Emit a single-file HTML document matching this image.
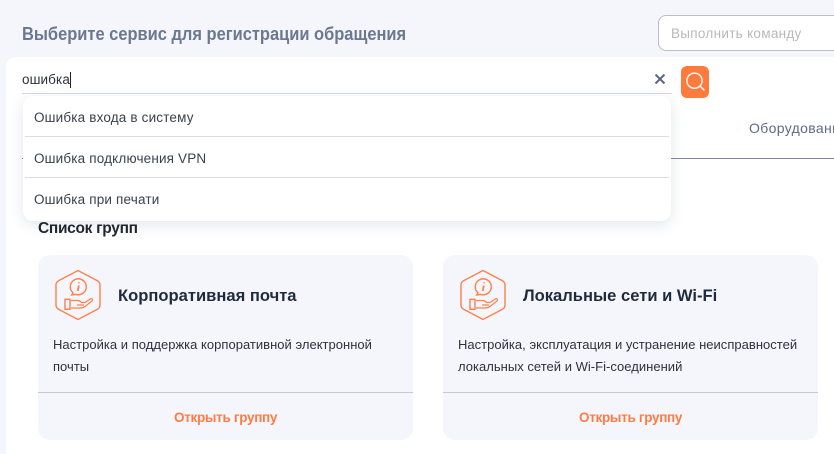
<!DOCTYPE html>
<html lang="ru"><head><meta charset="utf-8"><title>Сервис</title>
<style>
html,body{margin:0;padding:0;width:834px;height:454px;overflow:hidden;background:#f5f6fb;font-family:"Liberation Sans","Noto Sans CJK SC",sans-serif}
div{position:absolute;box-sizing:border-box;white-space:nowrap}
.t{line-height:20px;height:20px}
.panel{left:6px;top:57px;width:828px;height:397px;background:#fff;border-radius:10px 0 0 0}
.card{top:255px;width:375px;height:185px;background:#f5f6fb;border-radius:12px}
.dd{left:23px;top:96px;width:648px;height:125px;background:#fff;border-radius:10px;box-shadow:0 4px 14px rgba(90,100,130,.16)}
.sep{height:1px;background:#dcdce4}
.item{font-size:13.5px;color:#3c404b;left:34px;letter-spacing:.17px}
.h{font-size:17px;font-weight:bold;color:#1f2a3d;top:286px;transform:scaleX(.975);transform-origin:0 50%}
.p{font-size:13px;color:#2e323b;letter-spacing:.02px}
.o{font-size:13.5px;font-weight:bold;color:#ff7a45;top:408px;letter-spacing:-.3px}
</style></head><body>
<div class="t" style="left:22px;top:24px;font-size:18px;font-weight:bold;color:#6b7890;transform:scaleX(.914);transform-origin:0 50%">Выберите сервис для регистрации обращения</div>
<div style="left:658px;top:15px;width:176px;height:36px;background:#fff;border:1px solid #bdbdc2;border-right:0;border-radius:8px 0 0 8px"></div>
<div class="t" style="left:671px;top:24px;font-size:13.5px;color:#b8b8bc;letter-spacing:.3px">Выполнить команду</div>
<div class="panel"></div>
<div class="t" style="left:22px;top:70px;font-size:13.5px;color:#2c303a;letter-spacing:.1px">ошибка</div>
<div style="left:70px;top:72px;width:1px;height:16px;background:#222"></div>
<div style="left:22px;top:93px;width:650px;height:1px;background:#d8d9e2"></div>
<svg style="position:absolute;left:654px;top:73px" width="12" height="12" viewBox="0 0 12 12"><path d="M1.5 1.5L10.5 10.5M10.5 1.5L1.5 10.5" stroke="#5d6880" stroke-width="2"/></svg>
<svg style="position:absolute;left:681px;top:66px" width="28" height="32" viewBox="0 0 28 32"><rect width="28" height="32" rx="6" fill="#ff7a3d"/><circle cx="13.5" cy="14.7" r="7.6" fill="none" stroke="#fff5ee" stroke-width="1.5"/><path d="M19 20L23.5 24.5" stroke="#fff5ee" stroke-width="1.5"/></svg>
<div class="t" style="left:749px;top:118px;font-size:14px;color:#5f6b82;letter-spacing:.35px">Оборудование</div>
<div style="left:22px;top:158px;width:812px;height:1px;background:#7d879f"></div>
<div class="dd"></div>
<div class="sep" style="left:25px;top:136px;width:644px"></div>
<div class="sep" style="left:25px;top:177px;width:644px"></div>
<div class="t item" style="top:108px">Ошибка входа в систему</div>
<div class="t item" style="top:149px">Ошибка подключения VPN</div>
<div class="t item" style="top:190px">Ошибка при печати</div>
<div class="t" style="left:38px;top:219px;font-size:15.5px;font-weight:bold;color:#1f2630;letter-spacing:-.3px">Список групп</div>

<div class="card" style="left:38px"></div>
<div class="card" style="left:443px"></div>
<div style="left:38px;top:392px;width:375px;height:1px;background:#c9c9cd"></div>
<div style="left:443px;top:392px;width:375px;height:1px;background:#c9c9cd"></div>

<svg style="position:absolute;left:54px;top:269px" width="48" height="52" viewBox="0 0 48 52" fill="none" stroke="#ff7f4d" stroke-width="1.4">
<path d="M24 1.5L43 11.5Q46 13 46 16V36Q46 39 43 40.5L24 50.5L5 40.5Q2 39 2 36V16Q2 13 5 11.5Z"/>
<path d="M19 23.8A8 8 0 1 1 21.8 25.4L17.7 26Z"/>
<path d="M25 13.3V14.2M24.8 16.5L23.8 22" stroke-width="1.8"/>
<rect x="11" y="30.3" width="5" height="10"/>
<path d="M17 31.5H23Q26 31.5 27.5 33.5H31L37 29.5Q39.5 30 38 32L31 37.5Q29 39 26 39H17M23 36H30" stroke-width="1.2"/>
</svg>
<svg style="position:absolute;left:459px;top:269px" width="48" height="52" viewBox="0 0 48 52" fill="none" stroke="#ff7f4d" stroke-width="1.4">
<path d="M24 1.5L43 11.5Q46 13 46 16V36Q46 39 43 40.5L24 50.5L5 40.5Q2 39 2 36V16Q2 13 5 11.5Z"/>
<path d="M19 23.8A8 8 0 1 1 21.8 25.4L17.7 26Z"/>
<path d="M25 13.3V14.2M24.8 16.5L23.8 22" stroke-width="1.8"/>
<rect x="11" y="30.3" width="5" height="10"/>
<path d="M17 31.5H23Q26 31.5 27.5 33.5H31L37 29.5Q39.5 30 38 32L31 37.5Q29 39 26 39H17M23 36H30" stroke-width="1.2"/>
</svg>

<div class="t h" style="left:118px">Корпоративная почта</div>
<div class="t h" style="left:523px">Локальные сети и Wi-Fi</div>
<div class="t p" style="left:53px;top:335px">Настройка и поддержка корпоративной электронной</div>
<div class="t p" style="left:53px;top:357px">почты</div>
<div class="t p" style="left:458px;top:335px">Настройка, эксплуатация и устранение неисправностей</div>
<div class="t p" style="left:458px;top:357px">локальных сетей и Wi-Fi-соединений</div>
<div class="t o" style="left:174px">Открыть группу</div>
<div class="t o" style="left:579px">Открыть группу</div>
</body></html>
